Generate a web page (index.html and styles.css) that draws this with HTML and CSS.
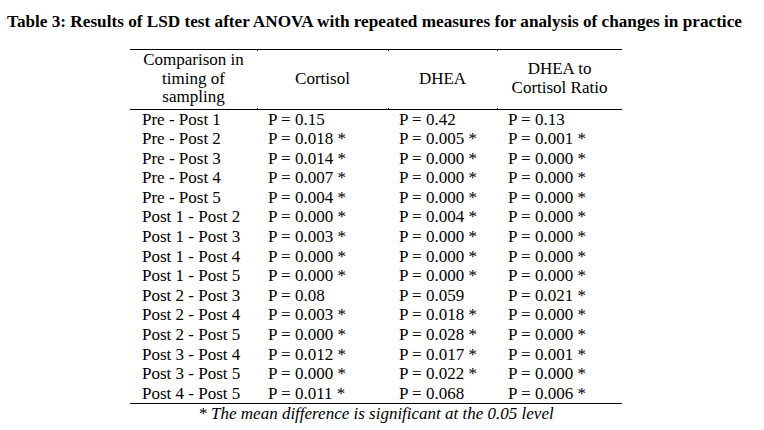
FILE: index.html
```html
<!DOCTYPE html>
<html>
<head>
<meta charset="utf-8">
<link rel="stylesheet" href="styles.css">
</head>
<body>
<div class="page">
  <h1 class="title">Table 3: Results of LSD test after ANOVA with repeated measures for analysis of changes in practice</h1>
  <div class="table-wrap">
    <table class="lsd">
      <thead>
        <tr>
          <th class="c1">Comparison in<br>timing of<br>sampling</th>
          <th class="c2">Cortisol</th>
          <th class="c3">DHEA</th>
          <th class="c4">DHEA to<br>Cortisol Ratio</th>
        </tr>
      </thead>
      <tbody>
        <tr><td>Pre - Post 1</td><td>P = 0.15</td><td>P = 0.42</td><td>P = 0.13</td></tr>
        <tr><td>Pre - Post 2</td><td>P = 0.018 *</td><td>P = 0.005 *</td><td>P = 0.001 *</td></tr>
        <tr><td>Pre - Post 3</td><td>P = 0.014 *</td><td>P = 0.000 *</td><td>P = 0.000 *</td></tr>
        <tr><td>Pre - Post 4</td><td>P = 0.007 *</td><td>P = 0.000 *</td><td>P = 0.000 *</td></tr>
        <tr><td>Pre - Post 5</td><td>P = 0.004 *</td><td>P = 0.000 *</td><td>P = 0.000 *</td></tr>
        <tr><td>Post 1 - Post 2</td><td>P = 0.000 *</td><td>P = 0.004 *</td><td>P = 0.000 *</td></tr>
        <tr><td>Post 1 - Post 3</td><td>P = 0.003 *</td><td>P = 0.000 *</td><td>P = 0.000 *</td></tr>
        <tr><td>Post 1 - Post 4</td><td>P = 0.000 *</td><td>P = 0.000 *</td><td>P = 0.000 *</td></tr>
        <tr><td>Post 1 - Post 5</td><td>P = 0.000 *</td><td>P = 0.000 *</td><td>P = 0.000 *</td></tr>
        <tr><td>Post 2 - Post 3</td><td>P = 0.08</td><td>P = 0.059</td><td>P = 0.021 *</td></tr>
        <tr><td>Post 2 - Post 4</td><td>P = 0.003 *</td><td>P = 0.018 *</td><td>P = 0.000 *</td></tr>
        <tr><td>Post 2 - Post 5</td><td>P = 0.000 *</td><td>P = 0.028 *</td><td>P = 0.000 *</td></tr>
        <tr><td>Post 3 - Post 4</td><td>P = 0.012 *</td><td>P = 0.017 *</td><td>P = 0.001 *</td></tr>
        <tr><td>Post 3 - Post 5</td><td>P = 0.000 *</td><td>P = 0.022 *</td><td>P = 0.000 *</td></tr>
        <tr><td>Post 4 - Post 5</td><td>P = 0.011 *</td><td>P = 0.068</td><td>P = 0.006 *</td></tr>
      </tbody>
    </table>
    <p class="note">* The mean difference is significant at the 0.05 level</p>
  </div>
</div>
</body>
</html>
```
FILE: styles.css
```css
html, body {
  margin: 0;
  padding: 0;
  background: #fff;
}
body {
  font-family: "Liberation Serif", "Times New Roman", serif;
  color: #000;
  font-size: 17px;
}
.page {
  display: flex;
  flex-direction: column;
  padding: 12px 0 0 7px;
}
.title {
  margin: 0;
  font-size: 17.2px;
  font-weight: bold;
  line-height: 20px;
  white-space: nowrap;
}
.table-wrap {
  display: flex;
  flex-direction: column;
  width: 492px;
  margin: 17px 0 0 123px;
}
.lsd {
  border-collapse: collapse;
  width: 492px;
  table-layout: fixed;
}
.lsd th {
  font-weight: normal;
  text-align: center;
  vertical-align: middle;
  line-height: 18.5px;
  padding: 1px 0 2px;
  border-top: 1px solid #000;
  border-bottom: 1px solid #000;
  position: relative;
}
.lsd th + th::before,
.lsd th + th::after {
  content: "";
  position: absolute;
  left: 0;
  width: 1px;
  height: 1px;
  background: #000;
}
.lsd th + th::before { top: 0; }
.lsd th + th::after { bottom: 0; }
.c1 { width: 127px; }
.c2 { width: 131px; }
.c3 { width: 109px; }
.c4 { width: 125px; }
.lsd td {
  padding: 0 0 0 11px;
  height: 19.6px;
  line-height: 19.6px;
  white-space: nowrap;
}
.lsd tbody tr:last-child td {
  border-bottom: 1px solid #000;
}
.lsd td:first-child { padding-left: 12px; }
.note {
  margin: 0;
  text-align: center;
  font-style: italic;
  line-height: 19px;
}
```
